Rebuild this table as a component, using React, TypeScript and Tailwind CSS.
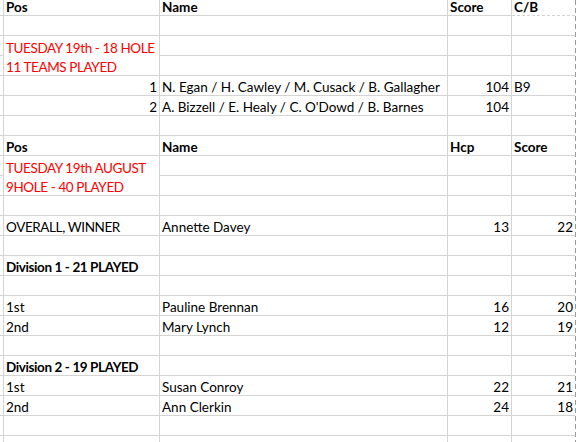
import React from "react";

type Cell = { text?: string; right?: boolean; bold?: boolean; red?: boolean; caps?: boolean };
type Row = { a?: Cell; b?: Cell; c?: Cell; d?: Cell; noLineA?: boolean };

// sheet rows, top to bottom
const rows: Row[] = [
  { a: { text: "Pos", bold: true }, b: { text: "Name", bold: true }, c: { text: "Score", bold: true }, d: { text: "C/B", bold: true } },
  {},
  { a: { text: "TUESDAY 19th - 18 HOLE", red: true, caps: true }, noLineA: true },
  { a: { text: "11 TEAMS PLAYED", red: true, caps: true } },
  { a: { text: "1", right: true }, b: { text: "N. Egan / H. Cawley / M. Cusack / B. Gallagher" }, c: { text: "104", right: true }, d: { text: "B9" } },
  { a: { text: "2", right: true }, b: { text: "A. Bizzell / E. Healy / C. O'Dowd / B. Barnes" }, c: { text: "104", right: true } },
  {},
  { a: { text: "Pos", bold: true }, b: { text: "Name", bold: true }, c: { text: "Hcp", bold: true }, d: { text: "Score", bold: true } },
  { a: { text: "TUESDAY 19th AUGUST", red: true, caps: true }, noLineA: true },
  { a: { text: "9HOLE - 40 PLAYED", red: true, caps: true } },
  {},
  { a: { text: "OVERALL, WINNER", caps: true }, b: { text: "Annette Davey" }, c: { text: "13", right: true }, d: { text: "22", right: true } },
  {},
  { a: { text: "Division 1 - 21 PLAYED", bold: true, caps: true } },
  {},
  { a: { text: "1st" }, b: { text: "Pauline Brennan" }, c: { text: "16", right: true }, d: { text: "20", right: true } },
  { a: { text: "2nd" }, b: { text: "Mary Lynch" }, c: { text: "12", right: true }, d: { text: "19", right: true } },
  {},
  { a: { text: "Division 2 - 19 PLAYED", bold: true, caps: true } },
  { a: { text: "1st" }, b: { text: "Susan Conroy" }, c: { text: "22", right: true }, d: { text: "21", right: true } },
  { a: { text: "2nd" }, b: { text: "Ann Clerkin" }, c: { text: "24", right: true }, d: { text: "18", right: true } },
  {},
  {},
];

function CellText({ cell }: { cell?: Cell }) {
  if (!cell?.text) return null;
  return (
    <span
      className={`w-full whitespace-nowrap px-[2px] text-[13.5px] leading-[15px] ${
        cell.caps ? "tracking-[-0.4px]" : "tracking-normal"
      } ${cell.right ? "text-right" : "text-left"} ${cell.bold ? "font-bold" : "font-normal"} ${
        cell.red ? "text-[#ff0000]" : "text-black"
      }`}
    >
      {cell.text}
    </span>
  );
}

export default function App() {
  return (
    <div className="flex h-[442px] w-[576px] overflow-hidden bg-white" style={{ fontFamily: "Lato, 'Liberation Sans', sans-serif" }}>
      <div className="flex w-[575px] flex-col">
        {rows.map((row, i) => {
          const h = i === 0 ? "h-[16px]" : "h-[20px]";
          const line = "border-b border-[#d4d4d4]";
          return (
            <div key={i} className={`grid shrink-0 grid-cols-[4px_156px_288px_64px_63px] ${h}`}>
              <div className={`${line} border-r`} />
              <div className={`flex items-end border-r border-[#d4d4d4] ${row.noLineA ? "" : "border-b"}`}>
                <CellText cell={row.a} />
              </div>
              <div className={`flex items-end ${line} border-r`}>
                <CellText cell={row.b} />
              </div>
              <div className={`flex items-end ${line} border-r`}>
                <CellText cell={row.c} />
              </div>
              <div className={`flex items-end ${line} ${i === 0 ? "border-dashed" : ""}`}>
                <CellText cell={row.d} />
              </div>
            </div>
          );
        })}
      </div>
      {/* page break line */}
      <div className="w-px shrink-0 bg-[repeating-linear-gradient(to_bottom,#9a9a9a_0_5px,transparent_5px_8px)]" />
    </div>
  );
}
